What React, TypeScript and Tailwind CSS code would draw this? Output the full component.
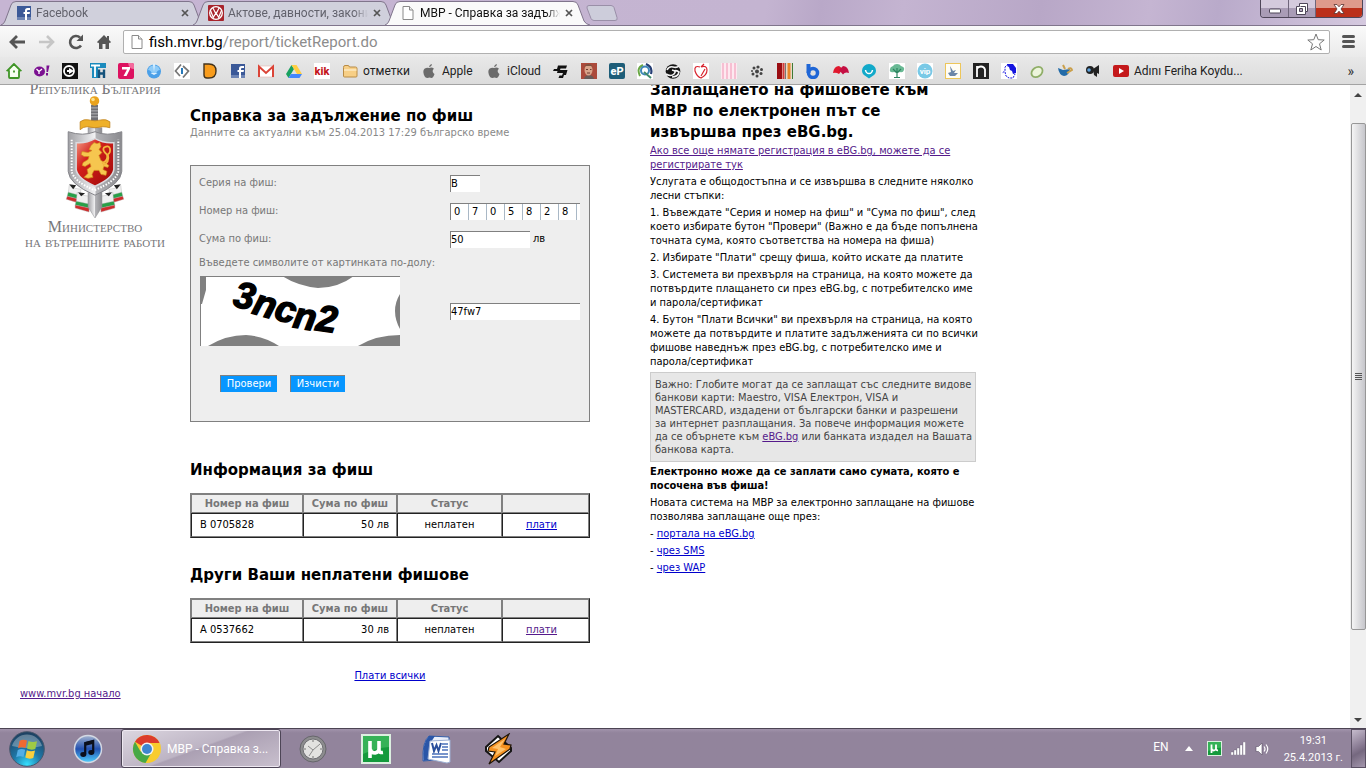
import type { ReactNode } from "react";

const UI = "font-['Roboto','Open_Sans',sans-serif]";

/* ---------- Browser tabs ---------- */

function FacebookIcon() {
  return (
    <svg viewBox="0 0 16 16" className="size-4 shrink-0">
      <rect x="1" y="1" width="14" height="14" fill="#3b5998" />
      <path d="M1 12h14v3H1z" fill="#6d84b4" />
      <path d="M9 15V9H7.500V7H9V5.500Q9 3 11.500 3H14v2h-2q-1 0-1 1v1h3l-.4 2H11v6z" fill="#fff" />
    </svg>
  );
}

function PageIcon() {
  return (
    <svg viewBox="0 0 16 16" className="size-4 shrink-0">
      <path d="M3 1.500h6.500L13 5v9.500H3z" fill="#fff" stroke="#8a8a8a" />
      <path d="M9.500 1.500V5H13" fill="#eee" stroke="#8a8a8a" />
    </svg>
  );
}

function VwIcon() {
  return (
    <svg viewBox="0 0 16 16" className="size-4 shrink-0">
      <rect width="16" height="16" rx="1" fill="#a8242c" />
      <circle cx="8" cy="8" r="6.300" fill="none" stroke="#fff" strokeWidth="1.300" />
      <path d="M4.800 2.800L8 9l3.200-6.200M2.300 5l3 7.500L8 7.800l2.700 4.700 3-7.500" fill="none" stroke="#fff" strokeWidth="1.200" />
    </svg>
  );
}

function Tab({ icon, title, active, first }: { icon: ReactNode; title: string; active?: boolean; first?: boolean }) {
  return (
    <div className={`relative flex h-6 w-[205px] items-center pl-[15px] ${first ? "" : "-ml-[13px]"} ${active ? "z-10" : ""}`}>
      <svg viewBox="0 0 205 24" preserveAspectRatio="none" className="absolute inset-0 size-full">
        <path
          d="M0 24Q3 23 4 20L10 4Q11 .5 15 .5H188Q192 .5 193 4L199 20Q201 23.500 205 24"
          fill={active ? "#fafafa" : "#d0d0dc"}
          stroke="#80758c"
        />
      </svg>
      <span className="relative flex items-center gap-1">
        {icon}
        <span
          className={`block w-[140px] overflow-hidden text-xs whitespace-nowrap [mask-image:linear-gradient(to_right,black_126px,transparent_140px)] ${active ? "text-[#111]" : "text-[#62626c]"}`}
        >
          {title}
        </span>
      </span>
      <button aria-label="Close tab" className="relative ml-[3px] flex size-3 shrink-0 items-center justify-center">
        <svg viewBox="0 0 8 8" className="size-2">
          <path d="M1 1l6 6M7 1L1 7" stroke="#555" strokeWidth="1.700" />
        </svg>
      </button>
    </div>
  );
}

function TabStrip() {
  return (
    <div className="flex h-[25px] shrink-0 items-end bg-[linear-gradient(100deg,#c6b5d3_0%,#c4b4d1_56%,#b9a8c8_60%,#c4b4d1_66%,#b8a7c7_76%,#c5b5d2_84%,#b9aaca_89%,#d5c9df_100%)] pl-px">
      <Tab first icon={<FacebookIcon />} title="Facebook" />
      <Tab icon={<VwIcon />} title="Актове, давности, закони" />
      <Tab active icon={<PageIcon />} title="МВР - Справка за задълж" />
      <button aria-label="New tab" className="mb-[4px] -ml-[4px]">
        <svg viewBox="0 0 32 16" className="h-4 w-8">
          <path d="M3 .5h22q2 0 3 2l3 10q1 3-2 3H8q-2 0-3-2L1 3Q.5 .5 3 .5z" fill="#cdcddb" stroke="#9a8fa8" />
        </svg>
      </button>
      <div className="mr-[3px] mb-[7px] ml-auto flex h-[18px] overflow-hidden rounded-b-[4px] border border-t-0 border-[#4e4659]">
        <button aria-label="Minimize" className="flex w-[28px] items-center justify-center border-r border-[#6f667b] bg-linear-to-b from-[#d4cadd] from-50% to-[#a99cb6] to-50%">
          <svg viewBox="0 0 12 6" className="mt-1 h-[6px] w-3">
            <rect x=".5" y="1" width="11" height="4" rx="1" fill="#fff" stroke="#4e4659" />
          </svg>
        </button>
        <button aria-label="Restore" className="flex w-[27px] items-center justify-center border-r border-[#6f667b] bg-linear-to-b from-[#d4cadd] from-50% to-[#a99cb6] to-50%">
          <svg viewBox="0 0 12 12" className="size-3">
            <path d="M3.500 .5h8v8h-2v3h-9v-8h3z" fill="#fff" stroke="#4e4659" />
            <path d="M3.500 5.500h3v3h-3z" fill="#b3a7bf" stroke="#4e4659" />
            <path d="M9.500 8.500v-5h-5" fill="none" stroke="#4e4659" />
          </svg>
        </button>
        <button aria-label="Close" className="flex w-[46px] items-center justify-center bg-linear-to-b from-[#de9a8c] from-50% to-[#bb2f1a] to-50%">
          <svg viewBox="0 0 12 10" className="h-[10px] w-3">
            <path d="M1 .5h3l2 2.300L8 .5h3L8 5l3 4.500H8L6 7.200 4 9.500H1L4 5z" fill="#fff" stroke="#5b3230" strokeWidth=".8" />
          </svg>
        </button>
      </div>
    </div>
  );
}

/* ---------- Toolbar ---------- */

function Toolbar() {
  return (
    <div className="flex h-8 shrink-0 items-center border-t border-[#80758c] bg-linear-to-b from-[#fafafa] to-[#eaeaea] pl-2">
      <button aria-label="Back" className="w-[30px]">
        <svg viewBox="0 0 18 16" className="h-4 w-[18px]">
          <path d="M9 2L3 8l6 6M3 8h14" fill="none" stroke="#555" strokeWidth="2.800" />
        </svg>
      </button>
      <button aria-label="Forward" className="w-[29px]">
        <svg viewBox="0 0 18 16" className="h-4 w-[18px]">
          <path d="M9 2l6 6-6 6M15 8H1" fill="none" stroke="#c6c6c6" strokeWidth="2.600" />
        </svg>
      </button>
      <button aria-label="Reload" className="w-[29px]">
        <svg viewBox="0 0 18 18" className="size-[18px]">
          <path d="M14 12.500A6 6 0 1 1 13 4.500" fill="none" stroke="#555" strokeWidth="2.600" />
          <path d="M16 1.500V8H9.500z" fill="#555" />
        </svg>
      </button>
      <button aria-label="Home" className="w-[27px]">
        <svg viewBox="0 0 16 16" className="size-4">
          <path d="M8 1L1 8l1.200 1.200L3 8.500V15h3.500v-5h3v5H13V8.500l.8.700L15 8l-2-2V2h-2v2z" fill="#555" />
        </svg>
      </button>
      <label className="flex h-6 min-w-0 flex-1 items-center rounded-[2px] border border-[#b0b0b0] bg-white pr-1 pl-[5px]">
        <PageIcon />
        <span className="relative ml-1 min-w-0 flex-1 text-[15px] leading-5">
          <span className="pointer-events-none absolute inset-0 whitespace-nowrap text-[#8c8c8c]">
            <span className="text-black">fish.mvr.bg</span>/report/ticketReport.do
          </span>
          <input aria-label="Address" className="block h-5 w-full bg-transparent outline-none" />
        </span>
        <svg viewBox="0 0 18 18" className="size-[18px]">
          <path d="M9 1l2.200 5.700 6 .3-4.700 3.800L14.200 17 9 13.500 3.800 17l1.700-6.200L.8 7l6-.3z" fill="#fff" stroke="#777" />
        </svg>
      </label>
      <button aria-label="Menu" className="flex w-9 flex-col items-center gap-[2px] pl-px">
        <span className="h-[3px] w-[13px] rounded-full bg-[#555]" />
        <span className="h-[3px] w-[13px] rounded-full bg-[#555]" />
        <span className="h-[3px] w-[13px] rounded-full bg-[#555]" />
      </button>
    </div>
  );
}

/* ---------- Bookmarks ---------- */

const applePath =
  "M11 1q0 2.500-2.800 3.200Q8 2 11 1zM8.200 5q2.500-1.500 4.800.7-2.600 2-.2 4.800.4.300.7.400Q12.200 15 10.500 15q-2-1-4 0Q4 15 2.800 11.500 1.200 6 5 5q1.500-.3 3.200 0z";

const bookmarks: { name: string; label?: string; width?: string; art: ReactNode }[] = [
  {
    name: "Home page",
    art: <path d="M8 1L1.500 7.500 3 8v6q0 1 1 1h8q1 0 1-1V8l1.500-.5zM8 9.500v-2" fill="#f6fff0" stroke="#3f9526" strokeWidth="1.800" />,
  },
  {
    name: "Yahoo",
    art: (
      <>
        <ellipse cx="5.500" cy="8.500" rx="5.500" ry="5" fill="#7b1091" />
        <path d="M2.500 6L5 8.500v2.500M8 6L5 8.500" stroke="#fff" strokeWidth="1.300" fill="none" />
        <path d="M12.500 2.500h3l-1.500 6.500h-1.500zM12 10h2v2.500h-2z" fill="#7b1091" />
      </>
    ),
  },
  {
    name: "Ring",
    art: (
      <>
        <rect width="16" height="16" fill="#111" />
        <circle cx="7" cy="8" r="5" fill="none" stroke="#fff" strokeWidth="1.800" />
        <path d="M5 7h2V5l5 3-5 3V9H5z" fill="#fff" />
      </>
    ),
  },
  {
    name: "TH",
    art: (
      <>
        <path d="M0 0h16v5H0zM2 5h6v10H2z" fill="#1b8bbd" />
        <path d="M1 2.500h9M5 2v12" stroke="#fff" strokeWidth="1.800" />
        <path d="M9 6.500V15M14 6.500V15M9 10.500h5" stroke="#15537c" strokeWidth="2.400" />
      </>
    ),
  },
  {
    name: "Nova 7",
    art: (
      <>
        <rect width="16" height="16" rx="2" fill="#dd1260" />
        <path d="M10 0h4q2 0 2 2v4q-5 0-6-6z" fill="#f46a9c" />
        <path d="M4 4h8v2L8.500 13H5.500L9 6.500H4z" fill="#fff" />
      </>
    ),
  },
  {
    name: "Splash",
    art: (
      <>
        <circle cx="8" cy="8.500" r="7" fill="#4ba0e8" />
        <path d="M2 7q3 0 4 4h4q1-4 4-4-1-3-3-4-2 0-3-2-1 2-3 2-2 1-3 4z" fill="#8ecbf8" />
        <path d="M7 1l1 8 1-8q-1-1-2 0zM4.500 10l3.500 2 3.500-2" fill="#dff2ff" />
      </>
    ),
  },
  {
    name: "Diamond",
    art: (
      <>
        <rect width="16" height="16" fill="#fff" />
        <path d="M7 1.500L1.500 8 6 13M9 3l5.500 5L9 14.500" fill="none" stroke="#777" strokeWidth="1.700" />
        <path d="M8 5v6" stroke="#2979b8" strokeWidth="2" />
      </>
    ),
  },
  {
    name: "D",
    art: <path d="M2 1h5q7 0 7 7t-7 7H5q-3 0-3-3z" fill="#f89c1c" stroke="#43331c" strokeWidth="1.400" />,
  },
  {
    name: "Facebook",
    art: (
      <>
        <rect x="1" y="1" width="14" height="14" fill="#3b5998" />
        <path d="M1 12h14v3H1z" fill="#6d84b4" />
        <path d="M9 15V9H7.500V7H9V5.500Q9 3 11.500 3H14v2h-2q-1 0-1 1v1h3l-.4 2H11v6z" fill="#fff" />
      </>
    ),
  },
  {
    name: "Gmail",
    art: (
      <>
        <path d="M0 3h16v11H0z" fill="#fff" stroke="#e6b5b0" strokeWidth=".6" />
        <path d="M1 14V3.500L8 10l7-6.500V14" fill="none" stroke="#db4437" strokeWidth="2" />
      </>
    ),
  },
  {
    name: "Drive",
    art: (
      <>
        <path d="M5.500 2L0 11l2.500 4 5.500-9z" fill="#18a15f" />
        <path d="M5.500 2h5L16 11h-5z" fill="#ffce43" />
        <path d="M5 11h11l-2.500 4h-11z" fill="#4387fd" />
      </>
    ),
  },
  {
    name: "kik",
    art: (
      <>
        <rect width="16" height="16" fill="#fff" />
        <text x="8" y="12" textAnchor="middle" fontSize="11" fontWeight="800" fill="#c4161c">
          kik
        </text>
      </>
    ),
  },
  {
    name: "отметки",
    label: "отметки",
    width: "w-[79px]",
    art: (
      <>
        <path d="M1.500 4.500q0-2 1.500-2h3q1 0 1.500 1.500h6q1.500 0 1.500 1.500V13q0 1-1 1h-11.500q-1 0-1-1z" fill="#f7cf86" stroke="#b98c46" />
        <path d="M2 7h12.500" stroke="#fdeac2" strokeWidth="1.500" />
      </>
    ),
  },
  { name: "Apple", label: "Apple", width: "w-[65px]", art: <path d={applePath} fill="#6b6b6b" /> },
  { name: "iCloud", label: "iCloud", width: "w-[67px]", art: <path d={applePath} fill="#6b6b6b" /> },
  {
    name: "S",
    art: <path d="M5 2.500h9l-1 3H7.500L7 7h7.500L13 12h-2l-1 3H5.500l1-2.500H9l1-2.500H4l.5-2H0l1-2h3z" fill="#111" />,
  },
  {
    name: "Portrait",
    art: (
      <>
        <rect width="16" height="16" fill="#ab4a3b" />
        <path d="M3 16q1-4 5-4t5 4z" fill="#675b58" />
        <ellipse cx="7.500" cy="7" rx="4" ry="5.500" fill="#d9a48a" />
        <path d="M3.500 5q0-4 4-4t4 4l-1-2h-6z" fill="#7f5240" />
        <path d="M5 6.500h2M9 6.500h1.500M6 10h3" stroke="#6b3b30" />
      </>
    ),
  },
  {
    name: "eP",
    art: (
      <>
        <rect width="16" height="16" rx="2" fill="#1d5d78" />
        <text x="8" y="12" textAnchor="middle" fontSize="11" fontWeight="800" fill="#fff">
          eP
        </text>
      </>
    ),
  },
  {
    name: "Swirl",
    art: (
      <>
        <rect width="16" height="16" fill="#fff" />
        <path d="M3 13Q-1 5 6 2" fill="none" stroke="#6aa845" strokeWidth="2" />
        <path d="M9 1q7 3 5 10" fill="none" stroke="#253e74" strokeWidth="2.200" />
        <circle cx="8" cy="7.500" r="4" fill="none" stroke="#3e86b8" strokeWidth="2" />
        <path d="M7 9l7 6" stroke="#3e8a6a" strokeWidth="2" />
      </>
    ),
  },
  {
    name: "Globe",
    art: (
      <>
        <circle cx="8" cy="8.500" r="7.300" fill="#151515" />
        <path d="M2 7q2-4 6-3t6-1M1 11q5 3 8 0t-2-4M7 14q6 0 7-5-3-2-5-1" fill="none" stroke="#f2f2f2" strokeWidth="1.600" />
      </>
    ),
  },
  {
    name: "Red apple",
    art: (
      <>
        <rect width="16" height="16" fill="#fff" />
        <path d="M7 4Q1 2 2 8q2 6 6 7 6-3 6-8 0-5-6-3M8 4l3-3M12 6l-4 7" fill="none" stroke="#d8232e" strokeWidth="1.200" />
      </>
    ),
  },
  {
    name: "Pink stripes",
    art: (
      <>
        <rect width="16" height="16" fill="#fde9f0" />
        <path d="M2 0v16M6 0v16M10 0v16M14 0v16" stroke="#f7bfd2" strokeWidth="2" />
      </>
    ),
  },
  {
    name: "Dots",
    art: (
      <g fill="#444">
        <circle cx="8" cy="8.500" r="2" />
        <circle cx="5" cy="5" r="1.500" />
        <circle cx="9" cy="4" r="1.600" />
        <circle cx="12.500" cy="6.500" r="1.500" />
        <circle cx="12" cy="10.500" r="1.500" />
        <circle cx="8" cy="13" r="1.500" />
        <circle cx="4" cy="11" r="1.500" />
        <circle cx="3" cy="8" r="1" />
      </g>
    ),
  },
  {
    name: "Stripes",
    art: (
      <>
        <rect width="16" height="16" fill="#e9d9c8" />
        <path d="M2.500 0v16" stroke="#9a0d12" strokeWidth="5" />
        <path d="M6.500 0v16" stroke="#d33a3a" strokeWidth="2" />
        <path d="M8.500 0v16" stroke="#777" strokeWidth="1" />
        <path d="M12 0v16" stroke="#e8862a" strokeWidth="3" />
        <path d="M15.500 0v16" stroke="#3f7a35" strokeWidth="1" />
      </>
    ),
  },
  {
    name: "b",
    art: (
      <>
        <path d="M3.500 1v9" stroke="#1f66d6" strokeWidth="4" />
        <circle cx="8" cy="10" r="4.500" fill="none" stroke="#1f66d6" strokeWidth="3.500" />
      </>
    ),
  },
  {
    name: "Mask",
    art: (
      <>
        <path d="M0 10Q1 3 6 3l4 3-4 5Q3 9 0 10z" fill="#e0182d" />
        <path d="M16 10Q15 3 10 3L6 7l4 4.500q2-3 6-1.500z" fill="#c50f43" />
      </>
    ),
  },
  {
    name: "Pin",
    art: (
      <>
        <path d="M8 15.500L4.500 13Q1 11 1 7.500a7 6.500 0 0 1 14 0Q15 11 11.500 13z" fill="#12a9c9" />
        <path d="M4.500 7q.5 3.500 3.500 3.500T11.500 7" fill="none" stroke="#fff" strokeWidth="1.500" />
      </>
    ),
  },
  {
    name: "Tree",
    art: (
      <>
        <rect width="16" height="16" fill="#fff" />
        <path d="M8 1q3 0 4 2 4 1 3 4-1 3-4 2l-3 1-3-1Q0 10 1 6q0-2 3-3 1-2 4-2z" fill="#69b994" />
        <path d="M8 5v9M4 6l4 4 4-4M5 14.500h6" fill="none" stroke="#2c8560" strokeWidth="1.200" />
      </>
    ),
  },
  {
    name: "vip",
    art: (
      <>
        <rect width="16" height="16" fill="#fff" />
        <circle cx="8" cy="8" r="7.500" fill="#79c9e6" />
        <text x="8" y="10.500" textAnchor="middle" fontSize="8" fontWeight="700" fill="#fff">
          vip
        </text>
      </>
    ),
  },
  {
    name: "Ship",
    art: (
      <>
        <rect x=".5" y=".5" width="15" height="15" fill="#fffdf5" stroke="#edc65a" />
        <path d="M5 3l3 5 3-1-2 3h4l-3 3H5l-2-3 3-1z" fill="#6c86a8" />
      </>
    ),
  },
  {
    name: "n",
    art: (
      <>
        <rect width="16" height="16" fill="#222" />
        <path d="M4 14V3M4 6q1-2.500 4-2.500t4 3V14" fill="none" stroke="#fff" strokeWidth="1.800" />
      </>
    ),
  },
  {
    name: "Elephant",
    art: (
      <>
        <rect width="16" height="16" fill="#fff" />
        <path d="M7 1h5l3 4v5l-3 1-1-3-2-1-1-3-2-1z" fill="#1515e0" />
        <path d="M7 1L4 4v4l-3 2M4 9l1 4 3 2h4l2-4" fill="none" stroke="#1515e0" strokeDasharray="2 1" />
      </>
    ),
  },
  {
    name: "Loop",
    art: (
      <ellipse cx="8" cy="9" rx="6" ry="4.500" transform="rotate(-35 8 9)" fill="#edf5dc" stroke="#8fae68" strokeWidth="1.800" />
    ),
  },
  {
    name: "Cup",
    art: (
      <>
        <path d="M1 5l5 2 7-1q-1 7-6 7Q2 12 1 5z" fill="#236ba8" />
        <path d="M6 2l2 4M10 10l5-3q-1-3-4-1" fill="none" stroke="#caa04c" strokeWidth="2" />
      </>
    ),
  },
  {
    name: "Camera",
    art: (
      <>
        <circle cx="5" cy="7" r="4" fill="#222" />
        <circle cx="4" cy="7" r="1.800" fill="#5ea4e0" />
        <path d="M8 6l6-4v9l-2-1v4l-3-2z" fill="#222" />
      </>
    ),
  },
  {
    name: "YouTube",
    label: "Adını Feriha Koydu...",
    width: "w-[140px]",
    art: (
      <>
        <rect y="2" width="16" height="12" rx="2" fill="#c4191b" />
        <path d="M6 5l5 3-5 3z" fill="#fff" />
      </>
    ),
  },
];

function BookmarksBar() {
  return (
    <nav className="flex h-7 shrink-0 items-center border-b border-[#a3a3a3] bg-linear-to-b from-[#e8e8e8] to-[#dcdcdc] pr-3 pl-[6px]">
      {bookmarks.map((b) => (
        <a
          key={b.name + (b.label ?? "")}
          href="#"
          aria-label={b.name}
          className={`flex shrink-0 items-center gap-[5px] text-xs whitespace-nowrap text-[#222] ${b.width ?? "w-7"}`}
        >
          <svg viewBox="0 0 16 16" className="size-4 shrink-0">
            {b.art}
          </svg>
          {b.label}
        </a>
      ))}
      <button aria-label="More bookmarks" className="ml-auto text-sm text-[#333]">
        »
      </button>
    </nav>
  );
}

/* ---------- Page content ---------- */

function Emblem() {
  return (
    <svg viewBox="0 0 60 124" className="h-[123px] w-[60px]">
      <defs>
        <linearGradient id="steel" x1="0" x2="1">
          <stop offset="0" stopColor="#a0a0a4" />
          <stop offset=".5" stopColor="#f2f2f4" />
          <stop offset=".52" stopColor="#b4b4b8" />
          <stop offset="1" stopColor="#8a8a8e" />
        </linearGradient>
        <linearGradient id="field" x1="0" y1="0" x2="1" y2="1">
          <stop offset="0" stopColor="#f5a088" />
          <stop offset=".35" stopColor="#d3201c" />
          <stop offset="1" stopColor="#9d0909" />
        </linearGradient>
      </defs>
      {/* tricolour ribbon */}
      <g stroke="#aaa" strokeWidth=".4">
        <path d="M4 90q5 4 12 4l-2 9-11-4zM56 90q-5 4-12 4l2 9 11-4z" fill="#f0f0f0" />
        <path d="M3 97l11 3v4L2 101zM57 97l-11 3v4l12-3z" fill="#28a048" />
        <path d="M2 101l12 3v4L1 104zM58 101l-12 3v4l13-4z" fill="#cf2b2b" />
        <path d="M12 97q5 4 12 4v9l-13-2zM48 97q-5 4-12 4v9l13-2z" fill="#f0f0f0" />
        <path d="M11 106l13 3v4l-14-3zM49 106l-13 3v4l14-3z" fill="#28a048" />
        <path d="M10 110l14 3v4l-14-4zM50 110l-14 3v4l14-4z" fill="#cf2b2b" />
      </g>
      <path d="M4 89l7 1-3 4zM56 89l-7 1 3 4zM13 97l7 1-4 3zM47 97l-7 1 4 3z" fill="#222" />
      {/* sword */}
      <path d="M23 32h14v80l-7 11-7-11z" fill="url(#steel)" stroke="#8a8a8e" strokeWidth=".5" />
      <path d="M26 9h7v16h-7z" fill="#6f6f74" />
      <path d="M26 12h7M26 15h7M26 18h7M26 21h7" stroke="#b7b7ba" />
      <circle cx="29.500" cy="5" r="4.800" fill="#e9a21c" />
      <circle cx="28" cy="3.500" r="1.800" fill="#fbe08a" />
      <path d="M15 26q4-3 8-2 7 2 14 0 4-1 8 2v6q-4-1-7-1-8 2-16 0-4 0-7 3z" fill="#eeb029" stroke="#b87812" strokeWidth=".7" />
      {/* shield */}
      <path d="M3 36q15 5 27 0 12 5 27 0v40q-1 13-27 24Q4 89 3 76z" fill="url(#steel)" stroke="#85858a" />
      <path d="M6.500 44v32q2 10 23 19 22-9 24-19V44" fill="none" stroke="#fff" strokeWidth="2" strokeDasharray="1.500 1.500" />
      <path d="M11 47q10 1 19-4 9 5 19 4v27q-1 9-19 17Q12 83 11 74z" fill="url(#field)" stroke="#dadade" strokeWidth="1.500" />
      {/* lion */}
      <path
        d="M26 50l3-3 3 1 3-1 1 4-2 3 3 3-3 3 2 5 4 2 4 3-1 2-4-1-1 3 4 2-1 4-5-1-2-4-5 0-2 4 1 3-5 1-4-1 4-4-1-4 4-3-1-3-5 3-3-1 1-3 5-3 1-3-5 0-3-2 1-3 6 1 4-2-3-1z"
        fill="#f6c64f"
        stroke="#d28a1c"
        strokeWidth=".7"
      />
      <path d="M37 68q7-3 5-9-5-4-3-7 5-3 6 1 1 4-2 6 2 8-5 11" fill="none" stroke="#f2b73e" strokeWidth="1.800" />
    </svg>
  );
}

function Sidebar() {
  return (
    <aside className="flex w-[190px] shrink-0 flex-col pb-[27px] pl-5">
      <div className="-mt-1 flex w-[150px] flex-col items-center font-['Liberation_Serif',serif] text-base leading-[15px] whitespace-nowrap text-[#77777a] [font-variant:small-caps]">
        <span>Република България</span>
        <Emblem />
        <span>Министерство</span>
        <span>на вътрешните работи</span>
      </div>
      <a href="#" className="mt-auto text-[#551a8b] underline">
        www.mvr.bg начало
      </a>
    </aside>
  );
}

function Captcha() {
  return (
    <svg viewBox="0 0 200 70" role="img" aria-label="Captcha" className="h-[70px] w-[200px]">
      <rect width="200" height="70" fill="#fff" />
      <path d="M0 0h6v14L2 28H0zM82 0h72Q138 12 118 12 98 10 82 0zM200 18q-5 8-5 17t5 18zM8 70q18-11 38-11 18 1 33 11zM158 70q18-11 42-11v11z" fill="#808080" />
      <path d="M.5 70V.5H200" fill="none" stroke="#808080" />
      <g fontFamily="Liberation Sans" fontWeight="700" fontStyle="italic" fontSize="37" stroke="#000" strokeWidth="1.500">
        <text x="32" y="30" transform="rotate(12 32 30)">3</text>
        <text x="51" y="37" transform="rotate(16 51 37)">n</text>
        <text x="73" y="43" transform="rotate(14 73 43)">c</text>
        <text x="92" y="51" transform="rotate(10 92 51)">n</text>
        <text x="115" y="54" transform="rotate(8 115 54)">2</text>
      </g>
    </svg>
  );
}

const field = "block h-[17px] border-t border-l border-[#808080] bg-white text-black outline-none";

function TicketForm() {
  return (
    <form className="mt-[25px] h-[257px] border border-[#808080] bg-[#eee] pt-[3px] pl-2 text-[#777]">
      <div className="grid grid-cols-[251px_1fr] auto-rows-[28px] items-center">
        <label htmlFor="series">Серия на фиш:</label>
        <input id="series" defaultValue="В" className={`${field} w-[30px]`} />
        <label htmlFor="digit-0">Номер на фиш:</label>
        <div className="flex h-[17px] w-[130px] border-t border-l border-[#808080] bg-white">
          {"0705828".split("").map((digit, i) => (
            <input
              key={i}
              id={`digit-${i}`}
              aria-label={`Цифра ${i + 1}`}
              maxLength={1}
              defaultValue={digit}
              className="block h-4 w-[18px] border-r border-[#a9b8c6] pl-[3px] text-black outline-none"
            />
          ))}
        </div>
        <label htmlFor="amount">Сума по фиш:</label>
        <div className="flex items-center gap-[3px] text-black">
          <input id="amount" defaultValue="50" className={`${field} w-20`} />
          лв
        </div>
      </div>
      <label htmlFor="captcha" className="block h-[23px] pt-[3px]">
        Въведете символите от картинката по-долу:
      </label>
      <div className="grid grid-cols-[251px_1fr] items-center">
        <div className="pl-px">
          <Captcha />
        </div>
        <input id="captcha" defaultValue="47fw7" className={`${field} w-[130px]`} />
      </div>
      <div className="mt-[29px] ml-[21px] flex gap-[13px] text-white">
        <button type="button" className="h-[17px] w-[57px] border-t border-l border-[#808080] bg-[#0796ff]">
          Провери
        </button>
        <button type="reset" className="h-[17px] w-[55px] border-t border-l border-[#808080] bg-[#0796ff]">
          Изчисти
        </button>
      </div>
    </form>
  );
}

function TicketTable({ number, amount, visited }: { number: string; amount: string; visited?: boolean }) {
  const th = "h-[19px] border border-[#808080] bg-[#eee] font-bold text-[#777]";
  const td = "h-6 border border-t-[#222] border-r-[#808080] border-b-[#808080] border-l-[#222]";
  return (
    <table className="mt-[13px] w-full table-fixed border-separate border-spacing-0 border border-t-[#808080] border-r-[#222] border-b-[#222] border-l-[#808080]">
      <thead>
        <tr>
          <th className={`${th} w-[112px]`}>Номер на фиш</th>
          <th className={`${th} w-[94px]`}>Сума по фиш</th>
          <th className={`${th} w-[105px]`}>Статус</th>
          <th className={th} aria-label="Плащане" />
        </tr>
      </thead>
      <tbody>
        <tr>
          <td className={`${td} pl-2`}>{number}</td>
          <td className={`${td} pr-[7px] text-right`}>{amount}</td>
          <td className={`${td} text-center`}>неплатен</td>
          <td className={`${td} pr-2 text-center`}>
            <a href="#" className={`underline ${visited ? "text-[#551a8b]" : "text-[#0000cc]"}`}>
              плати
            </a>
          </td>
        </tr>
      </tbody>
    </table>
  );
}

const heading = "font-['DejaVu_Sans',sans-serif] text-[15px] font-bold";

function Report() {
  return (
    <main className="w-[400px] shrink-0 pt-[21px]">
      <h1 className={`${heading} leading-5`}>Справка за задължение по фиш</h1>
      <p className="text-[#888]">Данните са актуални към 25.04.2013 17:29 българско време</p>
      <TicketForm />
      <h2 className={`${heading} mt-[38px] leading-5`}>Информация за фиш</h2>
      <TicketTable number="В 0705828" amount="50 лв" />
      <h2 className={`${heading} mt-[27px] leading-5`}>Други Ваши неплатени фишове</h2>
      <TicketTable number="А 0537662" amount="30 лв" visited />
      <p className="mt-[26px] text-center">
        <a href="#" className="text-[#0000cc] underline">
          Плати всички
        </a>
      </p>
    </main>
  );
}

function Instructions() {
  return (
    <section className="ml-[60px] flex w-[326px] shrink-0 flex-col gap-[3px] whitespace-nowrap">
      <h2 className={`${heading} -mt-[5px] -mb-[2px] leading-[21px]`}>
        Заплащането на фишовете към
        <br />
        МВР по електронен път се
        <br />
        извършва през eBG.bg.
      </h2>
      <a href="#" className="text-[#551a8b] underline">
        Ако все още нямате регистрация в eBG.bg, можете да се
        <br />
        регистрирате тук
      </a>
      <p>
        Услугата е общодостъпна и се извършва в следните няколко
        <br />
        лесни стъпки:
      </p>
      <p>
        1. Въвеждате "Серия и номер на фиш" и "Сума по фиш", след
        <br />
        което избирате бутон "Провери" (Важно е да бъде попълнена
        <br />
        точната сума, която съответства на номера на фиша)
      </p>
      <p>2. Избирате "Плати" срещу фиша, който искате да платите</p>
      <p>
        3. Системета ви прехвърля на страница, на която можете да
        <br />
        потвърдите плащането си през eBG.bg, с потребителско име
        <br />и парола/сертификат
      </p>
      <p>
        4. Бутон "Плати Всички" ви прехвърля на страница, на която
        <br />
        можете да потвърдите и платите задълженията си по всички
        <br />
        фишове наведнъж през eBG.bg, с потребителско име и
        <br />
        парола/сертификат
      </p>
      <div className="border border-[#ccc] bg-[#e7e7e7] py-[5px] pl-1 leading-[13px] text-[#444]">
        Важно: Глобите могат да се заплащат със следните видове
        <br />
        банкови карти: Maestro, VISA Електрон, VISA и
        <br />
        MASTERCARD, издадени от български банки и разрешени
        <br />
        за интернет разплащания. За повече информация можете
        <br />
        да се обърнете към{" "}
        <a href="#" className="text-[#551a8b] underline">
          eBG.bg
        </a>{" "}
        или банката издадел на Вашата
        <br />
        банкова карта.
      </div>
      <p className="font-bold">
        Електронно може да се заплати само сумата, която е
        <br />
        посочена във фиша!
      </p>
      <p>
        Новата система на МВР за електронно заплащане на фишове
        <br />
        позволява заплащане още през:
      </p>
      {["портала на eBG.bg", "чрез SMS", "чрез WAP"].map((item) => (
        <p key={item}>
          -{" "}
          <a href="#" className="text-[#0000cc] underline">
            {item}
          </a>
        </p>
      ))}
    </section>
  );
}

function Scrollbar() {
  return (
    <div className="ml-auto flex w-4 shrink-0 flex-col items-center bg-[#f0f0f0]">
      <svg viewBox="0 0 8 4" className="mt-[8px] h-1 w-2">
        <path d="M4 0l4 4H0z" fill="#444" />
      </svg>
      <div className="mt-[26px] mb-[88px] flex w-[15px] flex-1 flex-col items-center justify-center gap-px rounded-[2px] border border-[#979797] bg-linear-to-r from-[#f5f5f5] to-[#c6c6cb]">
        <span className="h-px w-[7px] bg-[#555]" />
        <span className="h-px w-[7px] bg-[#555]" />
        <span className="h-px w-[7px] bg-[#555]" />
        <span className="h-px w-[7px] bg-[#555]" />
      </div>
      <svg viewBox="0 0 8 4" className="mb-[6px] h-1 w-2">
        <path d="M0 0h8L4 4z" fill="#444" />
      </svg>
    </div>
  );
}

/* ---------- Taskbar ---------- */

function MuTorrent({ className }: { className: string }) {
  return (
    <svg viewBox="0 0 30 30" className={className}>
      <rect width="30" height="30" fill="#dcefe0" />
      <rect x="2" y="2" width="26" height="26" fill="#149a3c" />
      <path d="M2 2h26v11Q15 14 2 20z" fill="#35b257" />
      <path d="M9 7v17M9 15q1 4 5 4 4-1 4-4V7v9q0 3 4 2.500" fill="none" stroke="#fff" strokeWidth="3.600" />
    </svg>
  );
}

function StartOrb() {
  return (
    <svg viewBox="0 0 36 36" className="size-9">
      <defs>
        <radialGradient id="orb" cx=".5" cy=".95" r=".9">
          <stop offset="0" stopColor="#35e0ff" />
          <stop offset=".45" stopColor="#1f78a8" />
          <stop offset="1" stopColor="#1d4263" />
        </radialGradient>
      </defs>
      <circle cx="18" cy="18" r="17.300" fill="url(#orb)" stroke="#48566b" />
      <path d="M3 15A15.500 15.500 0 0 1 33 15Q18 19 3 15z" fill="#fff" opacity=".3" />
      <path d="M10.500 10q3-2 7.500-.5L16.500 17q-4-1.500-7.500.3z" fill="#ef6a32" />
      <path d="M19.500 10q4 1.800 8.500.3L26.300 18q-4 1.500-8.300-.4z" fill="#9fca45" />
      <path d="M8.800 19q3.500-1.800 7.400-.3L14.500 26q-4-1.500-7.300.3z" fill="#53aee6" />
      <path d="M17.800 19.300q4 1.900 8.200.3L24.300 27q-4 1.500-8-.4z" fill="#f9cf3e" />
    </svg>
  );
}

function TunesIcon() {
  return (
    <svg viewBox="0 0 30 30" className="size-[30px]">
      <defs>
        <linearGradient id="tunes" x2="0" y2="1">
          <stop offset="0" stopColor="#a3b4cf" />
          <stop offset=".5" stopColor="#2250b0" />
          <stop offset="1" stopColor="#4fd0ff" />
        </linearGradient>
      </defs>
      <circle cx="15" cy="15" r="13.500" fill="url(#tunes)" stroke="#d3d8e3" strokeWidth="1.500" />
      <path d="M12.200 20V9l8-2v11" fill="none" stroke="#0b0f1c" strokeWidth="2.200" />
      <path d="M12 10l8.500-2" stroke="#0b0f1c" strokeWidth="3.500" />
      <ellipse cx="10.300" cy="20.500" rx="3" ry="2.400" fill="#0b0f1c" />
      <ellipse cx="18.300" cy="18.500" rx="3" ry="2.400" fill="#0b0f1c" />
    </svg>
  );
}

function ChromeIcon() {
  return (
    <svg viewBox="0 0 30 30" className="size-[30px] shrink-0">
      <circle cx="15" cy="15" r="14" fill="#f8cc2d" />
      <path d="M15 15L3 7.700A14 14 0 0 1 27.500 9H15z" fill="#dc3b2c" />
      <path d="M3 7.700A14 14 0 0 0 13.500 29l6-10.500L15 15 8.500 17.500z" fill="#47a847" />
      <circle cx="15" cy="15" r="6.500" fill="#f3f3f3" />
      <circle cx="15" cy="15" r="5" fill="#3f86d0" />
    </svg>
  );
}

function ClockIcon() {
  return (
    <svg viewBox="0 0 28 28" className="size-7">
      <circle cx="14" cy="14" r="13" fill="#8d8d8f" stroke="#66666b" />
      <circle cx="14" cy="14" r="10" fill="#e2e2e0" stroke="#6f6f73" />
      <path d="M14 15l-5-4M14 15l7-6M14 15l-4 6" stroke="#8b8b8b" fill="none" />
      <path d="M14 5v2M14 21v2M5 14h2M21 14h2" stroke="#777" />
    </svg>
  );
}

function WordIcon() {
  return (
    <svg viewBox="0 0 30 30" className="size-[30px]">
      <path d="M1 27Q0 8 7 2l20 1v22z" fill="#e9effa" stroke="#335da8" />
      <path d="M1.500 27Q0 9 7 2h6Q6 10 7 26z" fill="#2a56a8" />
      <path d="M8 7l20-1v22l-3 1L6 25z" fill="#fff" stroke="#9db0d4" />
      <path d="M10 9l2 8 2.500-6 2 6L19 9" fill="none" stroke="#2a4f9c" strokeWidth="2" />
      <path d="M20 10h6M20 13h6M20 16h6M10 20h16M10 23h16" stroke="#4b72bb" strokeWidth="1.600" />
    </svg>
  );
}

function WinampIcon() {
  return (
    <svg viewBox="0 0 30 32" className="h-8 w-[30px]">
      <path d="M14 3l13 12v3L15 29 2 18v-4z" fill="#fff" stroke="#151515" strokeWidth="2" />
      <path d="M25 1L5 14l-1 4 7 1-6 12 21-15 1-4-7-1z" fill="#f59120" stroke="#1e1408" strokeWidth="1.200" />
      <path d="M21 6L8 15l6 1-3 7 11-7-6-2z" fill="#ffc26b" />
    </svg>
  );
}

function Taskbar() {
  return (
    <footer className="flex h-10 shrink-0 items-center border-t border-[#4c4453] bg-linear-to-b from-[#a193ab] to-[#92849c] to-10% text-xs text-white">
      <div className="flex flex-1 items-center">
        <button aria-label="Start" className="flex w-[54px] justify-center">
          <StartOrb />
        </button>
        <button aria-label="Music" className="flex w-[67px] justify-center">
          <TunesIcon />
        </button>
        <button className="flex h-[39px] w-40 items-center gap-[5px] rounded-[3px] border border-[#4d4556] bg-[linear-gradient(160deg,#dcd6e0_0%,#bdb4c4_48%,#aba0b3_50%,#c9c0ce_100%)] pl-[10px] shadow-[inset_0_0_0_1px_#eee8f1]">
          <ChromeIcon />
          МВР - Справка з...
        </button>
        <button aria-label="Clock" className="flex w-16 justify-center">
          <ClockIcon />
        </button>
        <button aria-label="Torrents" className="flex w-[61px] justify-center">
          <MuTorrent className="size-[30px]" />
        </button>
        <button aria-label="Documents" className="flex w-[61px] justify-center">
          <WordIcon />
        </button>
        <button aria-label="Player" className="flex w-16 justify-center">
          <WinampIcon />
        </button>
      </div>
      <div className="flex h-full items-center">
        <span className="mr-[16px] mb-1">EN</span>
        <svg viewBox="0 0 8 5" className="mr-[14px] h-[5px] w-2">
          <path d="M4 0l4 5H0z" fill="#fff" />
        </svg>
        <MuTorrent className="mr-[9px] size-[15px]" />
        <svg viewBox="0 0 16 13" className="mr-[8px] h-[13px] w-4">
          <path d="M0 10h2.500v3H0zM3 8h2.500v5H3zM6 6h2.500v7H6zM9 3h2.500v10H9zM12 0h2.500v13H12z" fill="#fff" stroke="#5b5066" strokeWidth=".3" />
        </svg>
        <svg viewBox="0 0 15 14" className="mr-[14px] h-[14px] w-[15px]">
          <path d="M1 4.500h2.500L7 1v12L3.500 9.500H1z" fill="#fff" stroke="#5b5066" strokeWidth=".6" />
          <path d="M9 4.500q2 2.500 0 5M11 2.500q3.500 4.500 0 9" fill="none" stroke="#fff" strokeWidth="1.200" />
        </svg>
        <div className="mr-2 text-center text-[11px] leading-[17px] whitespace-nowrap">
          19:31
          <br />
          25.4.2013 г.
        </div>
        <button aria-label="Show desktop" className="h-full w-[15px] border border-[#5a5063] bg-[linear-gradient(150deg,#c6bccd_0%,#8a7c94_45%,#75687f_60%,#a497ad_100%)]" />
      </div>
    </footer>
  );
}

export default function App() {
  return (
    <div className={`flex h-screen flex-col overflow-hidden ${UI}`}>
      <TabStrip />
      <Toolbar />
      <BookmarksBar />
      <div className="flex min-h-0 flex-1 overflow-hidden bg-white font-['DejaVu_Sans_Condensed','DejaVu_Sans',sans-serif] text-[11px] leading-[14px] text-black">
        <Sidebar />
        <Report />
        <Instructions />
        <Scrollbar />
      </div>
      <Taskbar />
    </div>
  );
}
